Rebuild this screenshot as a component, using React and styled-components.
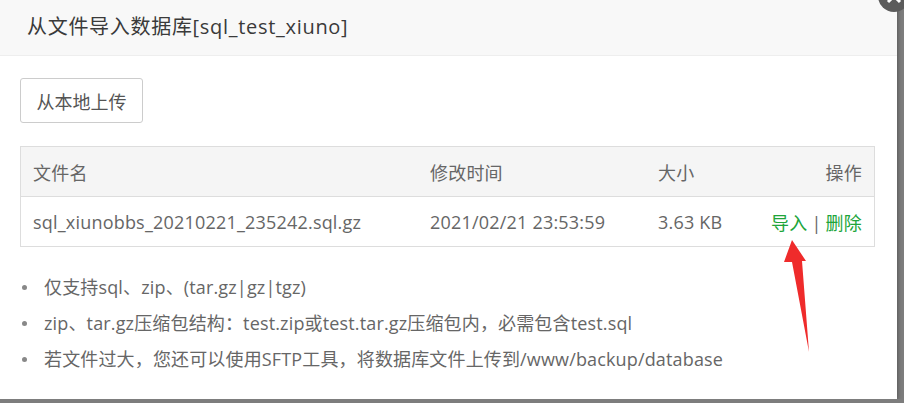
import styled, { createGlobalStyle } from "styled-components";

const GlobalStyle = createGlobalStyle`
  html, body {
    margin: 0;
    padding: 0;
    background: #7d7d7d;
    overflow: hidden;
  }
  body {
    font-family: "Open Sans", "Noto Sans CJK SC", sans-serif;
  }
`;

const files = [
  {
    name: "sql_xiunobbs_20210221_235242.sql.gz",
    time: "2021/02/21 23:53:59",
    size: "3.63 KB",
  },
];

const tips = [
  "仅支持sql、zip、(tar.gz|gz|tgz)",
  "zip、tar.gz压缩包结构：test.zip或test.tar.gz压缩包内，必需包含test.sql",
  "若文件过大，您还可以使用SFTP工具，将数据库文件上传到/www/backup/database",
];

export default function App() {
  return (
    <>
      <GlobalStyle />
      <Dialog>
        <Header>从文件导入数据库[sql_test_xiuno]</Header>

        <Body>
          <UploadButton>从本地上传</UploadButton>

          <Table>
            <Row head>
              <Cell>文件名</Cell>
              <Cell>修改时间</Cell>
              <Cell>大小</Cell>
              <Cell right>操作</Cell>
            </Row>
            {files.map((f) => (
              <Row key={f.name}>
                <Cell>{f.name}</Cell>
                <Cell>{f.time}</Cell>
                <Cell>{f.size}</Cell>
                <Cell right>
                  <Action>导入</Action>
                  <Sep>|</Sep>
                  <Action>删除</Action>
                </Cell>
              </Row>
            ))}
          </Table>

          <Tips>
            {tips.map((t) => (
              <li key={t}>{t}</li>
            ))}
          </Tips>
        </Body>

        <Arrow width="40" height="120" viewBox="0 0 40 120">
          <polygon points="12,0 26,21 22,21 29,112 12,22 4,22" fill="#ef2b2b" />
        </Arrow>
        <CloseButton>
          <svg width="32" height="32" viewBox="0 0 32 32">
            <path d="M10 10 L22 22 M22 10 L10 22" stroke="#fff" strokeWidth="3" />
          </svg>
        </CloseButton>
      </Dialog>
    </>
  );
}

const Dialog = styled.div`
  position: relative;
  width: 897px;
  height: 399px;
  background: #ffffff;
  box-shadow: 1px 1px 4px rgba(0, 0, 0, 0.3);
`;

const Header = styled.div`
  height: 55px;
  line-height: 53px;
  padding-left: 27px;
  background: #f8f8f8;
  border-bottom: 1px solid #eeeeee;
  color: #3a3a3a;
  font-size: 20px;
  letter-spacing: 0.7px;
`;

const Body = styled.div`
  padding: 22px 23px 0 20px;
`;

const UploadButton = styled.button`
  display: block;
  width: 123px;
  height: 45px;
  padding: 0;
  background: #ffffff;
  border: 1px solid #cccccc;
  border-radius: 3px;
  color: #555555;
  font-family: inherit;
  font-size: 18px;
`;

const Table = styled.div`
  margin-top: 23px;
  width: 855px;
  box-sizing: border-box;
  border: 1px solid #dddddd;
  border-bottom: none;
`;

const Row = styled.div`
  display: grid;
  grid-template-columns: 397px 228px 100px minmax(0, 1fr);
  height: 49px;
  align-items: center;
  background: ${(p) => (p.head ? "#f5f5f5" : "#ffffff")};
  border-bottom: 1px solid #dddddd;
  color: #666666;
  font-size: 18px;
  letter-spacing: 0.2px;
`;

const Cell = styled.div`
  padding: 0 12px;
  text-align: ${(p) => (p.right ? "right" : "left")};
  white-space: nowrap;
`;

const Action = styled.a`
  color: #20a53a;
  cursor: pointer;
`;

const Sep = styled.span`
  color: #666666;
  margin: 0 4px;
`;

const Tips = styled.ul`
  margin: 22px 0 0;
  padding: 0;
  list-style: none;
  color: #666666;
  font-size: 18px;
  letter-spacing: 0.15px;

  li {
    line-height: 36px;
  }

  li::before {
    content: "";
    display: inline-block;
    width: 5px;
    height: 5px;
    border-radius: 50%;
    background: #888888;
    margin: 0 17px 3px 2px;
    vertical-align: middle;
  }
`;

const Arrow = styled.svg`
  position: absolute;
  left: 780px;
  top: 240px;
`;

const CloseButton = styled.div`
  position: absolute;
  right: -13px;
  top: -20px;
  width: 32px;
  height: 32px;
  border-radius: 50%;
  background: #5b5b5b;
  display: flex;
  align-items: center;
  justify-content: center;
`;
